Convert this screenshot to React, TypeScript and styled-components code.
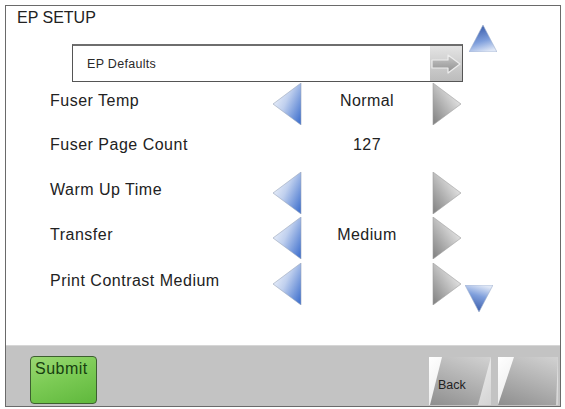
import React from 'react'
import styled, { createGlobalStyle } from 'styled-components'

const GlobalStyle = createGlobalStyle`
  *, *::before, *::after {
    box-sizing: border-box;
  }
  html, body {
    margin: 0;
    padding: 0;
    background: #fff;
  }
  body {
    font-family: "Liberation Sans", Arial, Helvetica, sans-serif;
    color: #222;
  }
`

const Frame = styled.div`
  margin: 5px 0 0 5px;
  width: 556px;
  height: 402px;
  border: 1px solid #6a6a6a;
  display: flex;
  flex-direction: column;
  background: #fff;
`

const Body = styled.div`
  flex: 1;
  display: grid;
  grid-template-columns: 457px 36px;
`

const Content = styled.div`
  display: flex;
  flex-direction: column;
`

const Title = styled.div`
  height: 38px;
  padding: 3px 0 0 11px;
  font-size: 16px;
  line-height: 18px;
`

const MenuBox = styled.div`
  margin-left: 66px;
  width: 391px;
  height: 38px;
  border: 1px solid #555;
  border-top: 2px solid #6e6e6e;
  display: flex;
  align-items: stretch;
`

const MenuLabel = styled.div`
  flex: 1;
  display: flex;
  align-items: center;
  padding-left: 14px;
  font-size: 12.5px;
  letter-spacing: 0.3px;
  color: #2a2a2a;
`

const MenuButton = styled.div`
  width: 32px;
  display: flex;
  align-items: center;
  justify-content: center;
  background: linear-gradient(180deg, #e4e4e4 0%, #cacaca 60%, #bcbcbc 100%);
`

const Rows = styled.div`
  display: flex;
  flex-direction: column;
`

const Row = styled.div<{ $h: number }>`
  height: ${p => p.$h}px;
  display: grid;
  grid-template-columns: 222px 30px 130px 30px;
  padding-left: 44px;
  align-items: center;
`

const Label = styled.div`
  font-size: 16px;
  letter-spacing: 0.5px;
  padding-bottom: 6px;
`

const Value = styled.div`
  text-align: center;
  font-size: 16px;
  letter-spacing: 0.4px;
  padding-bottom: 6px;
`

const ArrowCell = styled.div`
  height: 42px;
  display: flex;
  align-items: center;
`

const ScrollColumn = styled.div`
  display: flex;
  flex-direction: column;
  justify-content: space-between;
  padding: 19px 0 33px;
`

const ScrollUp = styled.div`
  padding-left: 6px;
  height: 27px;
`

const ScrollDown = styled.div`
  padding-left: 2px;
  height: 27px;
`

const Footer = styled.div`
  height: 61px;
  border-top: 1px solid #d6d6d6;
  background: #c3c3c3;
  display: flex;
  align-items: flex-start;
  padding: 10px 2px 0 24px;
`

const SubmitButton = styled.div`
  width: 67px;
  height: 48px;
  border: 1.5px solid #3d5f30;
  border-radius: 4px;
  background: linear-gradient(160deg, #9ad873 0%, #7ccb55 45%, #5fb83c 100%);
  color: #174010;
  font-size: 16px;
  letter-spacing: 0.5px;
  padding: 3px 0 0 4px;
`

const Spacer = styled.div`
  flex: 1;
`

const Tile = styled.div<{ $w: number; $gap: number }>`
  width: ${p => p.$w}px;
  height: 48px;
  margin-top: 1px;
  margin-left: ${p => p.$gap}px;
  background: linear-gradient(135deg, #ffffff 0%, #ececec 50%, #d4d4d4 100%);
`

const TileFace = styled.div<{ $shape: string }>`
  width: 100%;
  height: 100%;
  clip-path: polygon(${p => p.$shape});
  background: linear-gradient(200deg, #d2d2d2 0%, #b4b4b4 45%, #8e8e8e 100%);
  font-size: 12.5px;
  color: #222;
  padding: 21px 0 0 9px;
`

type Dir = 'left' | 'right'

function SideArrow({ dir }: { dir: Dir }) {
  const id = `side-${dir}`
  if (dir === 'left') {
    return (
      <svg width="30" height="42" viewBox="0 0 30 42">
        <defs>
          <linearGradient id={id} x1="0" y1="0.15" x2="1" y2="0.85">
            <stop offset="0" stopColor="#f6f8fc" />
            <stop offset="0.45" stopColor="#c0d0ee" />
            <stop offset="1" stopColor="#4474cf" />
          </linearGradient>
        </defs>
        <polygon points="1,21 29,0 29,42" fill={`url(#${id})`} stroke="#9aa6bb" strokeWidth="0.6" />
      </svg>
    )
  }
  return (
    <svg width="30" height="42" viewBox="0 0 30 42">
      <defs>
        <linearGradient id={id} x1="0" y1="0.9" x2="0.8" y2="0.1">
          <stop offset="0" stopColor="#858585" />
          <stop offset="0.5" stopColor="#b8b8b8" />
          <stop offset="1" stopColor="#ededed" />
        </linearGradient>
      </defs>
      <polygon points="1,0 1,42 29,21" fill={`url(#${id})`} stroke="#a0a0a0" strokeWidth="0.6" />
    </svg>
  )
}

function ScrollArrow({ up }: { up: boolean }) {
  const id = up ? 'scroll-up' : 'scroll-down'
  return (
    <svg width="28" height="27" viewBox="0 0 28 27">
      <defs>
        <linearGradient id={id} x1="0.3" y1={up ? '0' : '1'} x2="0.6" y2={up ? '1' : '0'}>
          <stop offset="0" stopColor="#3356a6" />
          <stop offset="0.6" stopColor="#7f9fdc" />
          <stop offset="1" stopColor="#dfe7f6" />
        </linearGradient>
      </defs>
      <polygon
        points={up ? '14,0 28,27 0,27' : '0,0 28,0 14,27'}
        fill={`url(#${id})`}
        stroke="#9fb0cc"
        strokeWidth="0.6"
      />
    </svg>
  )
}

function BlockArrow() {
  return (
    <svg width="30" height="20" viewBox="0 0 30 20">
      <defs>
        <linearGradient id="block-arrow" x1="0" y1="0" x2="0" y2="1">
          <stop offset="0" stopColor="#c8c8c8" />
          <stop offset="1" stopColor="#8f8f8f" />
        </linearGradient>
      </defs>
      <path
        d="M1 6 H17 V1 L29 10 L17 19 V14 H1 Z"
        fill="url(#block-arrow)"
        stroke="#ededed"
        strokeWidth="1.2"
        strokeLinejoin="round"
      />
    </svg>
  )
}

type Setting = { label: string; value?: string; arrows: boolean; h: number }

const settings: Setting[] = [
  { label: 'Fuser Temp', value: 'Normal', arrows: true, h: 44 },
  { label: 'Fuser Page Count', value: '127', arrows: false, h: 44 },
  { label: 'Warm Up Time', arrows: true, h: 45 },
  { label: 'Transfer', value: 'Medium', arrows: true, h: 46 },
  { label: 'Print Contrast Medium', arrows: true, h: 46 },
]

export default function App() {
  return (
    <>
      <GlobalStyle />
      <Frame>
        <Body>
          <Content>
            <Title>EP SETUP</Title>
            <MenuBox>
              <MenuLabel>EP Defaults</MenuLabel>
              <MenuButton>
                <BlockArrow />
              </MenuButton>
            </MenuBox>
            <Rows>
              {settings.map(s => (
                <Row key={s.label} $h={s.h}>
                  <Label>{s.label}</Label>
                  <ArrowCell>{s.arrows && <SideArrow dir="left" />}</ArrowCell>
                  <Value>{s.value ?? ''}</Value>
                  <ArrowCell>{s.arrows && <SideArrow dir="right" />}</ArrowCell>
                </Row>
              ))}
            </Rows>
          </Content>
          <ScrollColumn>
            <ScrollUp>
              <ScrollArrow up />
            </ScrollUp>
            <ScrollDown>
              <ScrollArrow up={false} />
            </ScrollDown>
          </ScrollColumn>
        </Body>
        <Footer>
          <SubmitButton>Submit</SubmitButton>
          <Spacer />
          <Tile $w={62} $gap={0}>
            <TileFace $shape="13px 0, 62px 0, 49px 48px, 1px 48px">Back</TileFace>
          </Tile>
          <Tile $w={60} $gap={7}>
            <TileFace $shape="16px 0, 60px 0, 58px 48px, 0 48px" />
          </Tile>
        </Footer>
      </Frame>
    </>
  )
}
